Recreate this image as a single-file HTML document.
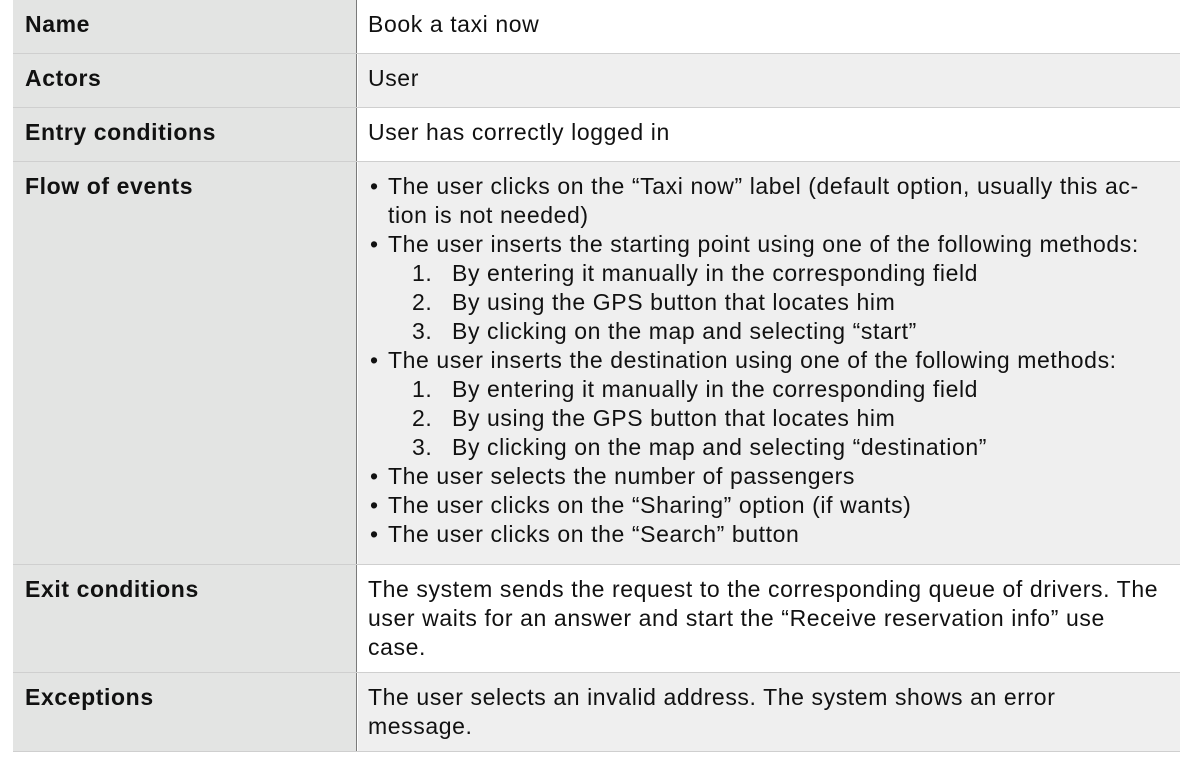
<!DOCTYPE html>
<html><head><style>
body{margin:0;width:1192px;height:763px;background:#fff;font-family:"Liberation Sans",sans-serif;font-size:23px;letter-spacing:0.6px;color:#111;position:relative;overflow:hidden}
.r{position:absolute;left:13px;width:1167px;border-bottom:1px solid #cfcfcf;box-sizing:border-box}
.l{position:absolute;left:0;top:0;bottom:0;width:344px;background:#e3e4e3;border-right:1px solid #7a7a7a;font-weight:bold;padding:10px 0 0 12px;box-sizing:border-box;line-height:29px;letter-spacing:0.6px}
.c{position:absolute;left:345px;right:0;top:0;bottom:0;padding:10px 0 0 10px;box-sizing:border-box;line-height:29px}
.w{background:#fff}.g{background:#efefef}
.ln{white-space:nowrap;position:relative}
.b{padding-left:20px}.b:before{content:"•";position:absolute;left:2px}
.n{padding-left:84px}.n span{position:absolute;left:44px}
</style></head><body>
<div class="r" style="top:0;height:54px"><div class="l">Name</div><div class="c w">Book a taxi now</div></div>
<div class="r" style="top:54px;height:54px"><div class="l">Actors</div><div class="c g">User</div></div>
<div class="r" style="top:108px;height:54px"><div class="l">Entry conditions</div><div class="c w">User has correctly logged in</div></div>
<div class="r" style="top:162px;height:403px"><div class="l">Flow of events</div><div class="c g">
<div class="ln b">The user clicks on the “Taxi now” label (default option, usually this ac-</div>
<div class="ln" style="padding-left:20px">tion is not needed)</div>
<div class="ln b">The user inserts the starting point using one of the following methods:</div>
<div class="ln n"><span>1.</span>By entering it manually in the corresponding field</div>
<div class="ln n"><span>2.</span>By using the GPS button that locates him</div>
<div class="ln n"><span>3.</span>By clicking on the map and selecting “start”</div>
<div class="ln b">The user inserts the destination using one of the following methods:</div>
<div class="ln n"><span>1.</span>By entering it manually in the corresponding field</div>
<div class="ln n"><span>2.</span>By using the GPS button that locates him</div>
<div class="ln n"><span>3.</span>By clicking on the map and selecting “destination”</div>
<div class="ln b">The user selects the number of passengers</div>
<div class="ln b">The user clicks on the “Sharing” option (if wants)</div>
<div class="ln b">The user clicks on the “Search” button</div>
</div></div>
<div class="r" style="top:565px;height:108px"><div class="l">Exit conditions</div><div class="c w">
<div class="ln">The system sends the request to the corresponding queue of drivers. The</div>
<div class="ln">user waits for an answer and start the “Receive reservation info” use</div>
<div class="ln">case.</div></div></div>
<div class="r" style="top:673px;height:79px"><div class="l">Exceptions</div><div class="c g">
<div class="ln">The user selects an invalid address. The system shows an error</div>
<div class="ln">message.</div></div></div>
</body></html>
